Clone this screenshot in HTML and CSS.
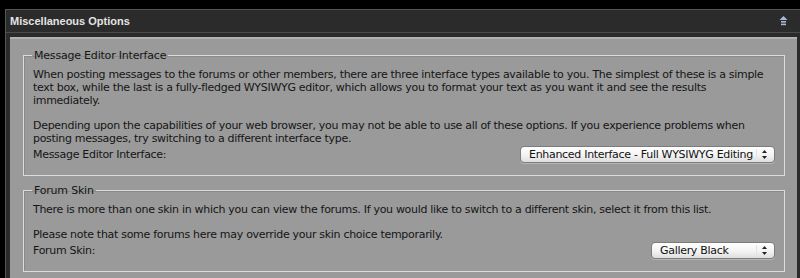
FILE: index.html
```html
<!DOCTYPE html>
<html lang="en">
<head>
    <meta charset="UTF-8">
    <title>Miscellaneous Options</title>
    <link rel="stylesheet" href="styles.css">
</head>
<body>

    <!-- Options Panel -->
    <div class="panel">
        <div class="panel-head">
            <span class="panel-title">Miscellaneous Options</span>
            <svg class="collapse" width="9" height="11" viewBox="0 0 9 11">
                <path d="M4.5 0 L8.5 4 L0.5 4 Z" fill="#a9b8d8"/>
                <rect x="2" y="5" width="5" height="1.6" fill="#a9b8d8"/>
                <rect x="2" y="7.6" width="5" height="1.6" fill="#a9b8d8"/>
            </svg>
        </div>

        <div class="panel-body">

            <!-- Editor Interface -->
            <fieldset class="option-group">
                <legend>Message Editor Interface</legend>
                <p class="desc">When posting messages to the forums or other members, there are three interface types available to you. The simplest of these is a simple text box, while the last is a fully-fledged WYSIWYG editor, which allows you to format your text as you want it and see the results immediately.<br><br>Depending upon the capabilities of your web browser, you may not be able to use all of these options. If you experience problems when posting messages, try switching to a different interface type.</p>
                <div class="option-row">
                    <span class="option-label">Message Editor Interface:</span>
                    <div class="select select-wide">
                        <span class="select-text">Enhanced Interface - Full WYSIWYG Editing</span>
                        <svg class="select-arrows" width="7" height="11" viewBox="0 0 7 11">
                            <path d="M3.5 1 L6 4 L1 4 Z" fill="#222"/>
                            <path d="M3.5 10 L6 7 L1 7 Z" fill="#222"/>
                        </svg>
                    </div>
                </div>
            </fieldset>

            <!-- Forum Skin -->
            <fieldset class="option-group">
                <legend>Forum Skin</legend>
                <p class="desc">There is more than one skin in which you can view the forums. If you would like to switch to a different skin, select it from this list.<br><br>Please note that some forums here may override your skin choice temporarily.</p>
                <div class="option-row">
                    <span class="option-label">Forum Skin:</span>
                    <div class="select select-narrow">
                        <span class="select-text">Gallery Black</span>
                        <svg class="select-arrows" width="7" height="11" viewBox="0 0 7 11">
                            <path d="M3.5 1 L6 4 L1 4 Z" fill="#222"/>
                            <path d="M3.5 10 L6 7 L1 7 Z" fill="#222"/>
                        </svg>
                    </div>
                </div>
            </fieldset>

        </div>
    </div>

</body>
</html>
```

FILE: styles.css
```css
/* Base */
body {
    margin: 0;
    background-color: #000;
    font-family: "DejaVu Sans", Verdana, sans-serif;
    color: #151515;
    overflow: hidden;
}

/* Panel */
.panel {
    margin: 9px 0 0 5px;
    border-top: 1px solid #555;
    border-left: 1px solid #555;
    background-color: #2b2b2b;
}

.panel-head {
    height: 22px;
    display: flex;
    align-items: center;
    justify-content: space-between;
    padding: 0 12px 0 4px;
    border-bottom: 1px solid #4a4a4a;
}

.panel-title {
    font-family: "Liberation Sans", Arial, sans-serif;
    font-weight: bold;
    font-size: 11px;
    color: #e4e4e4;
}

.collapse {
    display: block;
}

.panel-body {
    margin: 4px 3px 0 4px;
    background-color: #9a9a9a;
    border-top: 2px solid #b2b2b2;
    padding: 10px 12px 2px 13px;
}

/* Fieldsets */
.option-group {
    margin: 0 0 8px 0;
    padding: 7px 9px 12px 9px;
    border: 1px solid #dcdcdc;
    box-shadow: inset 1px 1px 0 #8a8a8a;
}

.option-group legend {
    font-size: 11px;
    padding: 0 2px;
    margin-left: -1px;
    color: #151515;
    letter-spacing: -0.2px;
}

.desc {
    margin: 0;
    font-size: 11px;
    line-height: 12.8px;
    letter-spacing: -0.3px;
}

.option-row {
    display: flex;
    justify-content: space-between;
    align-items: center;
    height: 17px;
}

.option-label {
    font-size: 11px;
    letter-spacing: -0.3px;
}

/* Select boxes */
.select {
    height: 17px;
    display: flex;
    align-items: center;
    justify-content: space-between;
    border: 1px solid #7c7c7c;
    border-radius: 4px;
    background: linear-gradient(#ffffff, #f3f3f3 55%, #dedede);
    box-shadow: 0 1px 0 #b5b5b5;
    font-size: 11px;
    letter-spacing: -0.3px;
    padding: 0 6px 0 8px;
    box-sizing: border-box;
}

.select-wide {
    width: 255px;
}

.select-narrow {
    width: 124px;
}

.select-text {
    color: #111;
    white-space: nowrap;
}

.select-arrows {
    display: block;
    border-left: 1px solid #e4e4e4;
    padding-left: 4px;
}
```
